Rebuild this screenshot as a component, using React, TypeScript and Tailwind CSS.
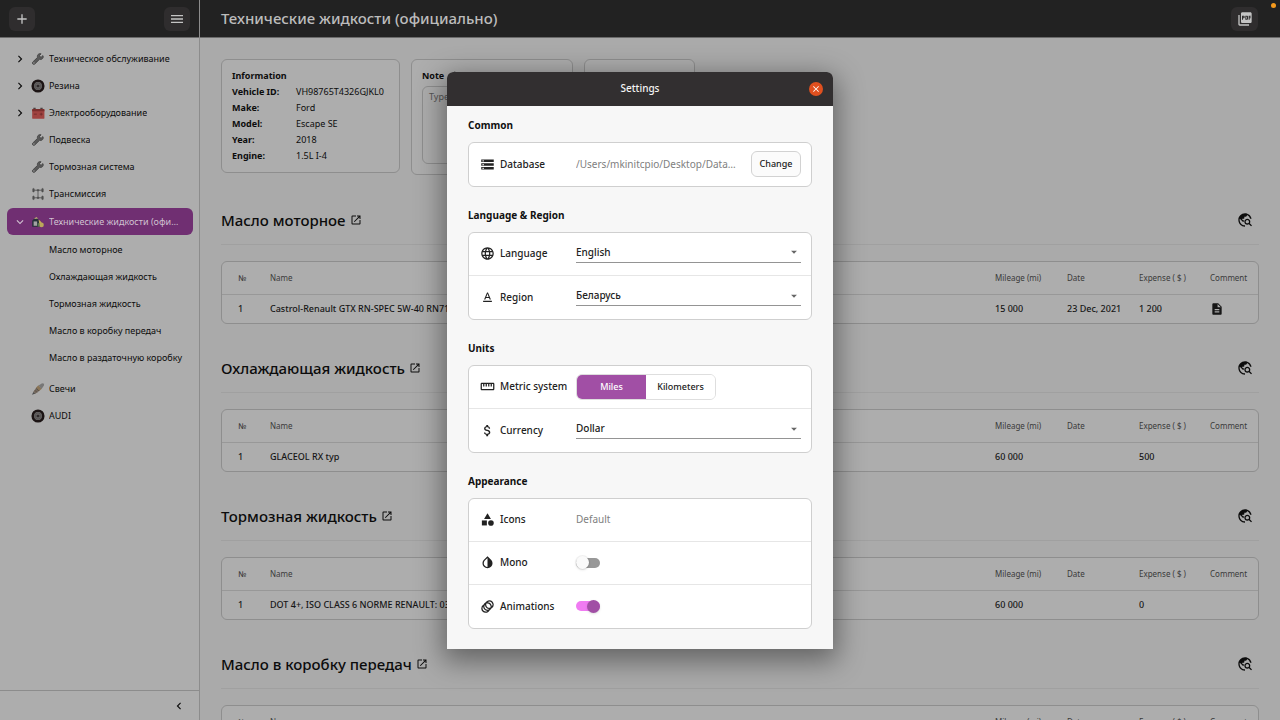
import React, { useState } from "react";
import {
  MdAdd,
  MdAnimation,
  MdArrowDropDown,
  MdAttachMoney,
  MdCategory,
  MdChevronLeft,
  MdChevronRight,
  MdClose,
  MdDescription,
  MdEdit,
  MdExpandMore,
  MdInvertColors,
  MdLanguage,
  MdMenu,
  MdOpenInNew,
  MdPictureAsPdf,
  MdStorage,
  MdStraighten,
  MdTextFormat,
  MdTravelExplore,
} from "react-icons/md";

/* ---------- Sidebar icons ---------- */

function WrenchIcon() {
  return (
    <svg viewBox="0 0 24 24" className="size-3.5">
      <path
        d="M20.500 6.200l-3 2.600-2.300-.5-.6-2.300 2.600-2.900c-2.600-.7-5.200.4-6 2.700-.4 1.200-.3 2.300.1 3.400L3.200 17c-1 1-1 2.500-.1 3.500s2.600.9 3.500-.1l8-7.900c1.300.5 2.800.4 4.200-.4 2-1.200 2.700-3.600 1.700-5.900z"
        fill="#5a5a5a"
        stroke="#444"
        strokeWidth="1.600"
      />
      <circle cx="5" cy="18.700" r="1" fill="#adadad" />
    </svg>
  );
}

function WheelIcon() {
  return (
    <svg viewBox="0 0 24 24" className="size-3.5">
      <circle cx="12" cy="12" r="9" fill="#777" stroke="#1c1414" strokeWidth="4.500" />
      <circle cx="12" cy="12" r="5.500" fill="none" stroke="#4c4848" strokeWidth="1" />
      <path d="M12 6v12M6.300 10.200l11.400 3.700M8.500 16.900l7-9.800M15.500 16.900l-7-9.800M17.700 10.200L6.300 13.900" stroke="#3b3636" strokeWidth="1" />
      <circle cx="12" cy="12" r="1.800" fill="#2a2525" />
    </svg>
  );
}

function BatteryIcon() {
  return (
    <svg viewBox="0 0 24 24" className="size-3.5">
      <path d="M4 3h4v3H4zM16 3h4v3h-4z" fill="#4b4040" />
      <rect x="2" y="5" width="21" height="17" rx="1.500" fill="#a04340" />
      <path d="M2 6.500C2 5.700 2.700 5 3.500 5h18c.8 0 1.500.7 1.500 1.500V9H2z" fill="#7b2f2d" />
      <path d="M5 14h5M15 14h5M17.500 11.500v5" stroke="#6c2a2a" strokeWidth="1.400" />
    </svg>
  );
}

function TransmissionIcon() {
  return (
    <svg viewBox="0 0 24 24" className="size-3.5" stroke="#505050" fill="#505050">
      <path d="M5 5.500h14M5 18.500h14M12 5v14" fill="none" strokeWidth="1.400" />
      <rect x="3" y="2.500" width="2.500" height="6" rx="1" />
      <rect x="18.500" y="2.500" width="2.500" height="6" rx="1" />
      <rect x="3" y="15.500" width="2.500" height="6" rx="1" />
      <rect x="18.500" y="15.500" width="2.500" height="6" rx="1" />
      <path d="M10.500 4.500h3v2h-3zM10.500 17.500h3v2h-3z" />
    </svg>
  );
}

function FluidsIcon() {
  return (
    <svg viewBox="0 0 24 24" className="size-3.5">
      <path d="M2 20V10l4-4.500h5l3 4.500v10z" fill="#26323a" />
      <path d="M5 7l4-3.500L12.500 6z" fill="#c0ae78" />
      <path d="M4.500 11h6v7.500h-6z" fill="#a3a3a3" />
      <path d="M13 8c3 1.500 6 5 6.500 9h-5z" fill="#c4ac54" />
      <circle cx="18" cy="17" r="4" fill="#bba75a" />
      <path d="M11.500 14h3v6h-3z" fill="#58794d" />
    </svg>
  );
}

function SparkPlugIcon() {
  return (
    <svg viewBox="0 0 24 24" className="size-3.5">
      <path d="M1.500 22l3-5.500L8 19.500z" fill="#4e4e4e" />
      <path d="M4 16.500l6-8 5.500 5.500-8 6z" fill="#75695e" />
      <path d="M9 9.500l3.500-4 6 6-4 3.500z" fill="#8b7556" />
      <path d="M13 6l6-4 3.500 1-.500 3.500-4 5.500z" fill="#777" />
      <path d="M6.500 14l4 4M9 11l4.500 4.500" stroke="#473f38" strokeWidth="1" />
    </svg>
  );
}

/* ---------- Data ---------- */

type NavItem = {
  label: string;
  icon: React.ReactNode;
  expandable?: boolean;
  active?: boolean;
  children?: string[];
};

const NAV: NavItem[] = [
  { label: "Техническое обслуживание", icon: <WrenchIcon />, expandable: true },
  { label: "Резина", icon: <WheelIcon />, expandable: true },
  { label: "Электрооборудование", icon: <BatteryIcon />, expandable: true },
  { label: "Подвеска", icon: <WrenchIcon /> },
  { label: "Тормозная система", icon: <WrenchIcon /> },
  { label: "Трансмиссия", icon: <TransmissionIcon /> },
  {
    label: "Технические жидкости (официально)",
    icon: <FluidsIcon />,
    active: true,
    children: [
      "Масло моторное",
      "Охлаждающая жидкость",
      "Тормозная жидкость",
      "Масло в коробку передач",
      "Масло в раздаточную коробку",
    ],
  },
  { label: "Свечи", icon: <SparkPlugIcon /> },
  { label: "AUDI", icon: <WheelIcon /> },
];

const INFO = [
  ["Vehicle ID:", "VH98765T4326GJKL0"],
  ["Make:", "Ford"],
  ["Model:", "Escape SE"],
  ["Year:", "2018"],
  ["Engine:", "1.5L I-4"],
];

type Part = {
  title: string;
  name: string;
  mileage: string;
  date: string;
  expense: string;
  comment: boolean;
};

const PARTS: Part[] = [
  {
    title: "Масло моторное",
    name: "Castrol-Renault GTX RN-SPEC 5W-40 RN710",
    mileage: "15 000",
    date: "23 Dec, 2021",
    expense: "1 200",
    comment: true,
  },
  { title: "Охлаждающая жидкость", name: "GLACEOL RX typ", mileage: "60 000", date: "", expense: "500", comment: false },
  {
    title: "Тормозная жидкость",
    name: "DOT 4+, ISO CLASS 6 NORME RENAULT: 03-50-006",
    mileage: "60 000",
    date: "",
    expense: "0",
    comment: false,
  },
  { title: "Масло в коробку передач", name: "ELF TRANSELF", mileage: "60 000", date: "", expense: "0", comment: false },
];

/* ---------- Page ---------- */

function Sidebar() {
  return (
    <aside className="flex w-[200px] shrink-0 flex-col border-r border-[#8c8c8c] bg-[#adadad]">
      <div className="flex h-[38px] shrink-0 items-center justify-between border-b border-[#6b6b6b] bg-[#222] px-[9px]">
        <button aria-label="Add" className="grid h-6 w-[26px] place-items-center rounded-md bg-[#2f2d2e] text-[#c4c4c4]">
          <MdAdd className="size-4" />
        </button>
        <button aria-label="Menu" className="grid h-6 w-[26px] place-items-center rounded-md bg-[#2f2d2e] text-[#c4c4c4]">
          <MdMenu className="size-4" />
        </button>
      </div>
      <nav className="min-h-0 flex-1 overflow-hidden pt-[7px] pr-1.5 pl-[7px] text-[9px] text-[#0c0c0c]">
        <ul>
          {NAV.map((item) => (
            <li key={item.label}>
              <a
                href="#"
                className={
                  item.active
                    ? "my-px flex h-[27px] items-center rounded-md bg-[#702f72] pr-2.5 pl-1.5 text-[#cfc0d0]"
                    : "flex h-[27px] items-center pr-2.5 pl-1.5"
                }
              >
                <span className="w-[18px] shrink-0">
                  {item.expandable && <MdChevronRight className="size-3.5" />}
                  {item.active && <MdExpandMore className="size-3.5" />}
                </span>
                <span className="w-[18px] shrink-0">{item.icon}</span>
                <span className="truncate">{item.label}</span>
              </a>
              {item.children && (
                <ul className="pb-1">
                  {item.children.map((child) => (
                    <li key={child}>
                      <a href="#" className="flex h-[27px] items-center pl-[42px] whitespace-nowrap">
                        {child}
                      </a>
                    </li>
                  ))}
                </ul>
              )}
            </li>
          ))}
        </ul>
      </nav>
      <div className="flex h-[30px] shrink-0 items-center justify-end border-t border-[#8c8c8c] px-[13px]">
        <button aria-label="Collapse sidebar">
          <MdChevronLeft className="size-3.5" />
        </button>
      </div>
    </aside>
  );
}

function PartSection({ part }: { part: Part }) {
  return (
    <section>
      <div className="flex h-[49px] items-center justify-between border-b border-[#a0a0a0]">
        <h2 className="flex items-center gap-1 text-[15px] font-medium text-[#0c0c0c]">
          {part.title}
          <a href="#" aria-label={"Open " + part.title}>
            <MdOpenInNew className="size-3" />
          </a>
        </h2>
        <button aria-label="Search online" className="pr-1.5">
          <MdTravelExplore className="size-4" />
        </button>
      </div>
      <div className="mt-4 mb-5 overflow-hidden rounded-md border border-[#8e8e8e] bg-[#adadad]">
        <table className="w-full table-fixed text-left">
          <thead>
            <tr className="h-8 border-b border-[#989898] text-[8px] text-[#3a3a3a]">
              <th className="w-12 pl-4 font-medium">№</th>
              <th className="font-normal">Name</th>
              <th className="w-[72px] font-normal">Mileage (mi)</th>
              <th className="w-[72px] font-normal">Date</th>
              <th className="w-[71px] font-normal">Expense ( $ )</th>
              <th className="w-12 font-normal">Comment</th>
            </tr>
          </thead>
          <tbody>
            <tr className="h-[29px] text-[9px] font-medium text-[#161616]">
              <td className="pl-4">1</td>
              <td className="truncate">{part.name}</td>
              <td>{part.mileage}</td>
              <td>{part.date}</td>
              <td>{part.expense}</td>
              <td>{part.comment && <MdDescription aria-label="Has comment" className="size-3.5" />}</td>
            </tr>
          </tbody>
        </table>
      </div>
    </section>
  );
}

function Content() {
  return (
    <main className="flex min-w-0 flex-1 flex-col bg-[#aaa]">
      <header className="flex h-[38px] shrink-0 items-center justify-between border-b border-[#6b6b6b] bg-[#222] pr-[22px] pl-[21px]">
        <h1 className="text-[15px] font-medium text-[#bcbcbc]">Технические жидкости (официально)</h1>
        <button aria-label="Export to PDF" className="grid h-6 w-[27px] place-items-center rounded-md bg-[#2f2d2e] text-[#c4c4c4]">
          <MdPictureAsPdf className="size-4" />
        </button>
      </header>
      <div className="min-h-0 flex-1 overflow-hidden px-[21px] pt-[21px]">
        <div className="mb-[21px] flex items-start gap-[11px] text-[9px] leading-4">
          <section className="h-[114px] w-[179px] rounded-md border border-[#8e8e8e] bg-[#adadad] px-2.5 pt-2">
            <h2 className="font-bold">Information</h2>
            <dl className="grid grid-cols-[64px_1fr]">
              {INFO.map(([term, value]) => (
                <React.Fragment key={term}>
                  <dt className="font-bold">{term}</dt>
                  <dd>{value}</dd>
                </React.Fragment>
              ))}
            </dl>
          </section>
          <section className="h-[116px] w-[162px] rounded-md border border-[#8e8e8e] bg-[#adadad] px-2.5 pt-2">
            <label htmlFor="note" className="flex items-center gap-0.5 font-bold">
              Note <MdEdit className="size-3" />
            </label>
            <textarea
              id="note"
              placeholder="Type here..."
              className="mt-0.5 block h-[78px] w-full resize-none rounded-md border border-[#8e8e8e] px-1.5 py-0.5 placeholder:text-[#555]"
            />
          </section>
          <section className="h-[114px] w-[111px] rounded-md border border-[#8e8e8e] bg-[#adadad] px-2.5 pt-2" />
        </div>
        {PARTS.map((part) => (
          <PartSection key={part.title} part={part} />
        ))}
      </div>
    </main>
  );
}

/* ---------- Settings dialog ---------- */

function Group({ title, children }: { title: string; children: React.ReactNode }) {
  return (
    <section>
      <h3 className="mb-[9px] text-[10px] leading-4 font-bold text-[#111]">{title}</h3>
      <div className="divide-y divide-[#e6e6e6] rounded-md border border-[#cfcfcf] bg-white">{children}</div>
    </section>
  );
}

function Row({
  icon,
  label,
  htmlFor,
  children,
}: {
  icon: React.ReactNode;
  label: string;
  htmlFor?: string;
  children: React.ReactNode;
}) {
  return (
    <div className="flex h-[43px] items-center pr-2.5 pl-[11px]">
      <label htmlFor={htmlFor} className="flex w-24 shrink-0 items-center gap-[5px] text-[10px] font-medium whitespace-nowrap text-[#222]">
        {icon}
        {label}
      </label>
      {children}
    </div>
  );
}

function SelectField({ id, value }: { id: string; value: string }) {
  return (
    <div className="mb-0.5 flex h-5 flex-1 items-center border-b border-[#949494]">
      <select id={id} defaultValue={value} className="min-w-0 flex-1 appearance-none bg-transparent text-[10px] font-medium text-[#222] outline-none">
        <option>{value}</option>
      </select>
      <MdArrowDropDown className="pointer-events-none size-3.5 shrink-0 text-[#666]" />
    </div>
  );
}

function Switch({ id, initial }: { id: string; initial: boolean }) {
  const [on, setOn] = useState(initial);
  return (
    <label className="flex cursor-pointer">
      <input id={id} type="checkbox" role="switch" checked={on} onChange={() => setOn(!on)} className="peer sr-only" />
      <span
        className={
          on
            ? "flex h-2.5 w-6 items-center justify-end rounded-full bg-[#f07bf2]"
            : "flex h-2.5 w-6 items-center rounded-full bg-[#989898]"
        }
      >
        <span className={on ? "size-[13px] rounded-full bg-[#a14fa5] shadow-sm" : "size-[13px] rounded-full bg-[#fafafa] shadow-sm ring-1 ring-black/5"} />
      </span>
    </label>
  );
}

function SettingsDialog() {
  const [unit, setUnit] = useState("Miles");
  const iconClass = "size-[15px]";
  return (
    <div
      role="dialog"
      aria-label="Settings"
      className="w-[386px] overflow-hidden rounded-t-md bg-[#f7f7f7] shadow-[0_8px_28px_4px_rgba(0,0,0,0.42)]"
    >
      <header className="grid h-[34px] grid-cols-[1fr_auto_1fr] items-center bg-[#322f30] px-2.5">
        <h2 className="col-start-2 text-[10px] font-medium text-[#f4f4f4]">Settings</h2>
        <button aria-label="Close" className="grid size-3.5 place-items-center justify-self-end rounded-full bg-[#e0501f] text-white">
          <MdClose className="size-2.5" />
        </button>
      </header>
      <div className="flex flex-col gap-5 px-[21px] pt-[11px] pb-5">
        <Group title="Common">
          <Row icon={<MdStorage className={iconClass} />} label="Database">
            <span className="min-w-0 flex-1 truncate pr-2.5 text-[10px] text-[#808080]">/Users/mkinitcpio/Desktop/Database</span>
            <button className="h-[26px] w-[50px] rounded-md border border-[#d2d2d2] bg-[#fbfbfb] text-[9px] font-medium text-[#222]">Change</button>
          </Row>
        </Group>
        <Group title="Language & Region">
          <Row icon={<MdLanguage className={iconClass} />} label="Language" htmlFor="language">
            <SelectField id="language" value="English" />
          </Row>
          <Row icon={<MdTextFormat className={iconClass} />} label="Region" htmlFor="region">
            <SelectField id="region" value="Беларусь" />
          </Row>
        </Group>
        <Group title="Units">
          <Row icon={<MdStraighten className={iconClass} />} label="Metric system">
            <div role="group" aria-label="Metric system" className="flex h-[26px] overflow-hidden rounded-md border border-[#dedede]">
              {["Miles", "Kilometers"].map((name) => (
                <button
                  key={name}
                  onClick={() => setUnit(name)}
                  className={
                    unit === name
                      ? "w-[69px] bg-[#a14fa5] text-[9px] font-medium text-white"
                      : "w-[69px] bg-white text-[9px] font-medium text-[#222]"
                  }
                >
                  {name}
                </button>
              ))}
            </div>
          </Row>
          <Row icon={<MdAttachMoney className={iconClass} />} label="Currency" htmlFor="currency">
            <SelectField id="currency" value="Dollar" />
          </Row>
        </Group>
        <Group title="Appearance">
          <Row icon={<MdCategory className={iconClass} />} label="Icons">
            <span className="text-[10px] text-[#808080]">Default</span>
          </Row>
          <Row icon={<MdInvertColors className={iconClass} />} label="Mono" htmlFor="mono">
            <Switch id="mono" initial={false} />
          </Row>
          <Row icon={<MdAnimation className={iconClass} />} label="Animations" htmlFor="animations">
            <Switch id="animations" initial={true} />
          </Row>
        </Group>
      </div>
    </div>
  );
}

export default function App() {
  return (
    <div className="relative h-screen overflow-hidden font-['Noto_Sans',sans-serif] text-[#0c0c0c]">
      <div className="flex h-full">
        <Sidebar />
        <Content />
      </div>
      <div className="absolute inset-0 flex items-center justify-center">
        <SettingsDialog />
      </div>
      <span className="absolute top-[3px] right-1 size-[5px] rounded-full bg-[#f59a1d]" />
    </div>
  );
}
